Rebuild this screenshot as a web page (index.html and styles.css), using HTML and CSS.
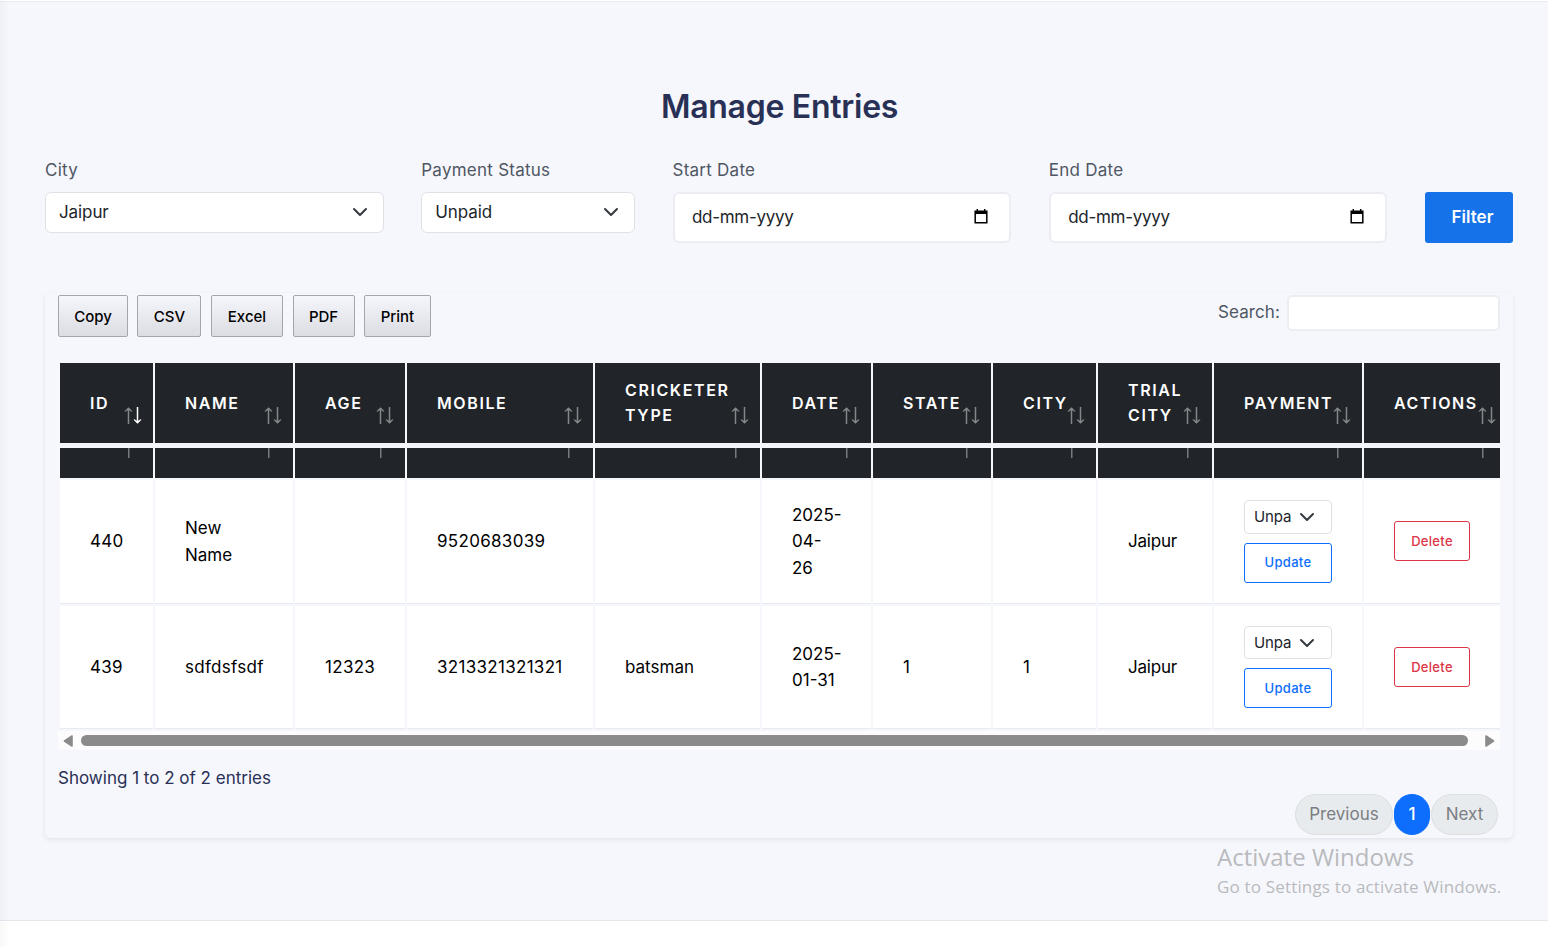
FILE: index.html
```html
<!DOCTYPE html>
<html lang="en">
<head>
<meta charset="utf-8">
<title>Manage Entries</title>
<link rel="stylesheet" href="styles.css">
</head>
<body>
<svg class="defs" width="0" height="0">
  <symbol id="chevron" viewBox="0 0 16 16"><path d="m2 5 6 6 6-6" fill="none" stroke="#343a40" stroke-width="2" stroke-linecap="round" stroke-linejoin="round"/></symbol>
  <symbol id="calendar" viewBox="0 0 14 16"><path d="M3.3 0v2M10.7 0v2" stroke="#000" stroke-width="1.5"/><path d="M1.2 2.2h11.6v11.6H1.2z" fill="none" stroke="#000" stroke-width="1.5"/><path d="M1 2h12v3H1z"/></symbol>
  <symbol id="up" viewBox="0 0 9 17"><path d="M4.500 17V1" stroke="currentColor" stroke-width="1.5"/><path d="M.5 4.300 4.500.3l4 4-1 .5-3-2-3 2z" fill="currentColor"/></symbol>
  <symbol id="down" viewBox="0 0 9 17"><path d="M4.500 0v16" stroke="currentColor" stroke-width="1.5"/><path d="m.5 12.700 4 4 4-4-1-.5-3 2-3-2z" fill="currentColor"/></symbol>
</svg>
<main class="page">
  <h1 class="title">Manage Entries</h1>
  <form class="filters">
    <div class="field"><label class="label">City</label><div class="select"><span>Jaipur</span><svg width="16" height="16"><use href="#chevron"/></svg></div></div>
    <div class="field"><label class="label">Payment Status</label><div class="select"><span>Unpaid</span><svg width="16" height="16"><use href="#chevron"/></svg></div></div>
    <div class="field"><label class="label">Start Date</label><div class="date"><span>dd-mm-yyyy</span><svg width="14" height="16"><use href="#calendar"/></svg></div></div>
    <div class="field"><label class="label">End Date</label><div class="date"><span>dd-mm-yyyy</span><svg width="14" height="16"><use href="#calendar"/></svg></div></div>
    <button type="button" class="filter-btn">Filter</button>
  </form>
  <section class="card">
    <div class="toolbar">
      <div class="exports">
        <button class="export w-copy">Copy</button><button class="export w-csv">CSV</button><button class="export w-excel">Excel</button><button class="export w-pdf">PDF</button><button class="export w-print">Print</button>
      </div>
      <div class="search"><span>Search:</span><div class="search-box"></div></div>
    </div>
    <div class="scroll">
      <table class="table">
        <colgroup><col class="c1"><col class="c2"><col class="c3"><col class="c4"><col class="c5"><col class="c6"><col class="c7"><col class="c8"><col class="c9"><col class="c10"><col class="c11"></colgroup>
        <tr class="head">
          <th>ID<span class="sort desc"><svg><use href="#up"/></svg><svg><use href="#down"/></svg></span></th>
          <th>NAME<span class="sort"><svg><use href="#up"/></svg><svg><use href="#down"/></svg></span></th>
          <th>AGE<span class="sort"><svg><use href="#up"/></svg><svg><use href="#down"/></svg></span></th>
          <th>MOBILE<span class="sort"><svg><use href="#up"/></svg><svg><use href="#down"/></svg></span></th>
          <th>CRICKETER<br>TYPE<span class="sort"><svg><use href="#up"/></svg><svg><use href="#down"/></svg></span></th>
          <th>DATE<span class="sort"><svg><use href="#up"/></svg><svg><use href="#down"/></svg></span></th>
          <th>STATE<span class="sort"><svg><use href="#up"/></svg><svg><use href="#down"/></svg></span></th>
          <th>CITY<span class="sort"><svg><use href="#up"/></svg><svg><use href="#down"/></svg></span></th>
          <th>TRIAL<br>CITY<span class="sort"><svg><use href="#up"/></svg><svg><use href="#down"/></svg></span></th>
          <th>PAYMENT<span class="sort"><svg><use href="#up"/></svg><svg><use href="#down"/></svg></span></th>
          <th>ACTIONS<span class="sort"><svg><use href="#up"/></svg><svg><use href="#down"/></svg></span></th>
        </tr>
        <tr class="subhead"><th></th><th></th><th></th><th></th><th></th><th></th><th></th><th></th><th></th><th></th><th></th></tr>
        <tr class="row first">
          <td class="num">440</td><td>New<br>Name</td><td></td><td class="num">9520683039</td><td></td><td>2025-<br>04-<br>26</td><td></td><td></td><td class="place">Jaipur</td>
          <td><div class="pay"><div class="mini"><span>Unpa</span><svg width="16" height="16"><use href="#chevron"/></svg></div><button class="btn update">Update</button></div></td>
          <td><button class="btn delete">Delete</button></td>
        </tr>
        <tr class="row second">
          <td class="num">439</td><td class="num">sdfdsfsdf</td><td class="num">12323</td><td class="num">3213321321321</td><td>batsman</td><td>2025-<br>01-31</td><td>1</td><td>1</td><td class="place">Jaipur</td>
          <td><div class="pay"><div class="mini"><span>Unpa</span><svg width="16" height="16"><use href="#chevron"/></svg></div><button class="btn update">Update</button></div></td>
          <td><button class="btn delete">Delete</button></td>
        </tr>
      </table>
    </div>
    <div class="scrollbar">
      <svg width="10" height="12" viewBox="0 0 10 12"><path d="M9 1v10L1.500 6z" fill="#8b8b8b" stroke="#8b8b8b" stroke-width="1.6" stroke-linejoin="round"/></svg>
      <div class="thumb"></div>
      <svg width="10" height="12" viewBox="0 0 10 12"><path d="M1 1v10L8.500 6z" fill="#8b8b8b" stroke="#8b8b8b" stroke-width="1.6" stroke-linejoin="round"/></svg>
    </div>
    <p class="info">Showing 1 to 2 of 2 entries</p>
    <nav class="pager"><span class="pg prev">Previous</span><span class="pg current">1</span><span class="pg next">Next</span></nav>
  </section>
</main>
<aside class="watermark"><div class="wm-title">Activate Windows</div><div class="wm-text">Go to Settings to activate Windows.</div></aside>
<div class="edge"></div>
</body>
</html>
```
FILE: styles.css
```css
* { box-sizing: border-box; }
body { margin: 0; height: 947px; overflow: hidden; background: #fff; padding-top: 1px; font-family: Inter, "Liberation Sans", sans-serif; font-size: 17px; color: #293056; }
button { font-family: inherit; margin: 0; padding: 0; }
svg { display: block; flex: none; }
.defs { position: absolute; }
.page { height: 920px; background: #f6f7fc; border-top: 1px solid #e9ebf0; border-bottom: 1px solid #e6e7ed; padding: 85px 35px 0 45px; }
.title { margin: 0; height: 40px; line-height: 40px; text-align: center; font-size: 32px; font-weight: 600; color: #293056; letter-spacing: -.27px; padding-left: 1px; }
.filters { display: grid; grid-template-columns: 338.5px 213.5px 338.5px 338.5px 88px; column-gap: 37.75px; margin-top: 30px; height: 86px; }
.label { display: block; height: 26px; line-height: 26px; margin-bottom: 9px; color: #4f5663; font-size: 17px; letter-spacing: .25px; }
.select { display: flex; align-items: center; justify-content: space-between; height: 41px; background: #fff; border: 1px solid #dee2e6; border-radius: 6px; padding: 0 15px 1px 13px; color: #212529; letter-spacing: -.1px; }
.date { display: flex; align-items: center; justify-content: space-between; height: 51px; background: #fff; border: 2px solid #ecedf3; border-radius: 6px; padding: 0 21.5px 2px 17.5px; color: #212529; letter-spacing: -.3px; }
.filter-btn { margin-top: 35px; height: 51px; border: 0; border-radius: 3px; background: #1572e8; color: #fff; font-size: 17px; font-weight: 600; padding: 0 0 1px 7px; }
.card { margin-top: 50px; width: 1468px; height: 545px; border-radius: 6px; padding: 2px 13px 0; box-shadow: 0 2px 5px rgba(40,45,70,.09); }
.toolbar { display: flex; justify-content: space-between; height: 66px; }
.exports { display: flex; gap: 9.4px; }
.export { height: 42px; border: 1px solid #a5a6ab; border-radius: 2px; background: linear-gradient(#f5f6fb, #dcdde2); color: #000; font-size: 15px; font-weight: 500; }
.w-copy { width: 70px; } .w-csv { width: 64px; } .w-excel { width: 72.4px; } .w-pdf { width: 62px; } .w-print { width: 67px; }
.search { display: flex; gap: 7px; line-height: 34px; color: #4f5663; letter-spacing: .1px; }
.search-box { width: 213px; height: 36px; background: #fff; border: 2px solid #ecedf3; border-radius: 5px; }
.scroll { width: 1442px; height: 370px; overflow: hidden; }
.table { width: 1451px; table-layout: fixed; border-collapse: separate; border-spacing: 2px; color: #000; }
.c1 { width: 93px; } .c2 { width: 138px; } .c3 { width: 110px; } .c4 { width: 186px; } .c5 { width: 165px; } .c6 { width: 109px; } .c7 { width: 118px; } .c8 { width: 103px; } .c9 { width: 114px; } .c10 { width: 148px; } .c11 { width: 143px; }
th, td { padding: 0 0 0 30px; text-align: left; vertical-align: middle; background-clip: padding-box; }
th { position: relative; background-color: #212529; color: #fff; font-size: 16px; font-weight: 600; letter-spacing: 1.6px; line-height: 25px; white-space: nowrap; }
.head { height: 83px; }
.head th { border-bottom: 3px solid #f3f4f9; }
.sort { position: absolute; right: 11px; bottom: 19.5px; display: flex; color: #84878a; }
.sort svg { width: 9px; height: 17px; }
.desc svg:last-child { color: #fff; }
.subhead { height: 30px; }
.subhead th { padding: 0; background-image: linear-gradient(#77797c, #77797c); background-size: 1.5px 10px; background-position: right 24px top 0; background-repeat: no-repeat; }
td { background-color: #fff; border-bottom: 1px solid #e8eaf2; line-height: 26.4px; font-size: 17px; }
.num { letter-spacing: .3px; }
.place { letter-spacing: -.2px; }
.first { height: 124px; }
.second { height: 123px; }
.pay { width: 88px; }
.mini { display: flex; align-items: center; gap: 8px; height: 34px; margin-bottom: 9px; border: 1px solid #dee2e6; border-radius: 4px; padding-left: 9px; font-size: 15px; color: #212529; letter-spacing: -.1px; }
.btn { display: block; height: 40px; border: 1px solid; border-radius: 3px; background: #fff; font-size: 13px; font-weight: 500; letter-spacing: .3px; }
.update { width: 88px; color: #0d6efd; padding-bottom: 2px; }
.delete { width: 76px; color: #dc3545; }
.first .delete { margin-bottom: 1px; }
.second .mini { height: 33px; padding-top: 1px; }
.second .update { padding-bottom: 0; }
.scrollbar { display: flex; align-items: center; gap: 8px; width: 1442px; height: 19px; background: #fcfcfc; padding: 0 5px; }
.thumb { width: 1387px; height: 11px; border-radius: 6px; background: #8b8b8b; margin-right: 9px; }
.info { margin: 15px 0 0; height: 26px; line-height: 26px; }
.pager { display: flex; justify-content: flex-end; gap: 1px; margin: 3px 2px 0 0; }
.pg { height: 41px; line-height: 39px; text-align: center; border: 1px solid #dcdfe2; border-radius: 21px; background: #e8ebee; color: #7b7e82; }
.prev { width: 98px; } .next { width: 67px; }
.current { width: 36px; background: #0d6efd; border-color: #0d6efd; color: #fff; font-weight: 500; }
.watermark { position: absolute; left: 1217px; top: 841px; font-family: "Open Sans", sans-serif; color: #b9babd; white-space: nowrap; }
.wm-title { font-size: 24px; line-height: 32px; }
.wm-text { font-size: 17px; line-height: 27px; letter-spacing: .17px; }
.edge { position: absolute; left: 0; top: 0; width: 9px; height: 947px; background: linear-gradient(90deg, rgba(30,35,60,.03), rgba(30,35,60,0)); }
```
